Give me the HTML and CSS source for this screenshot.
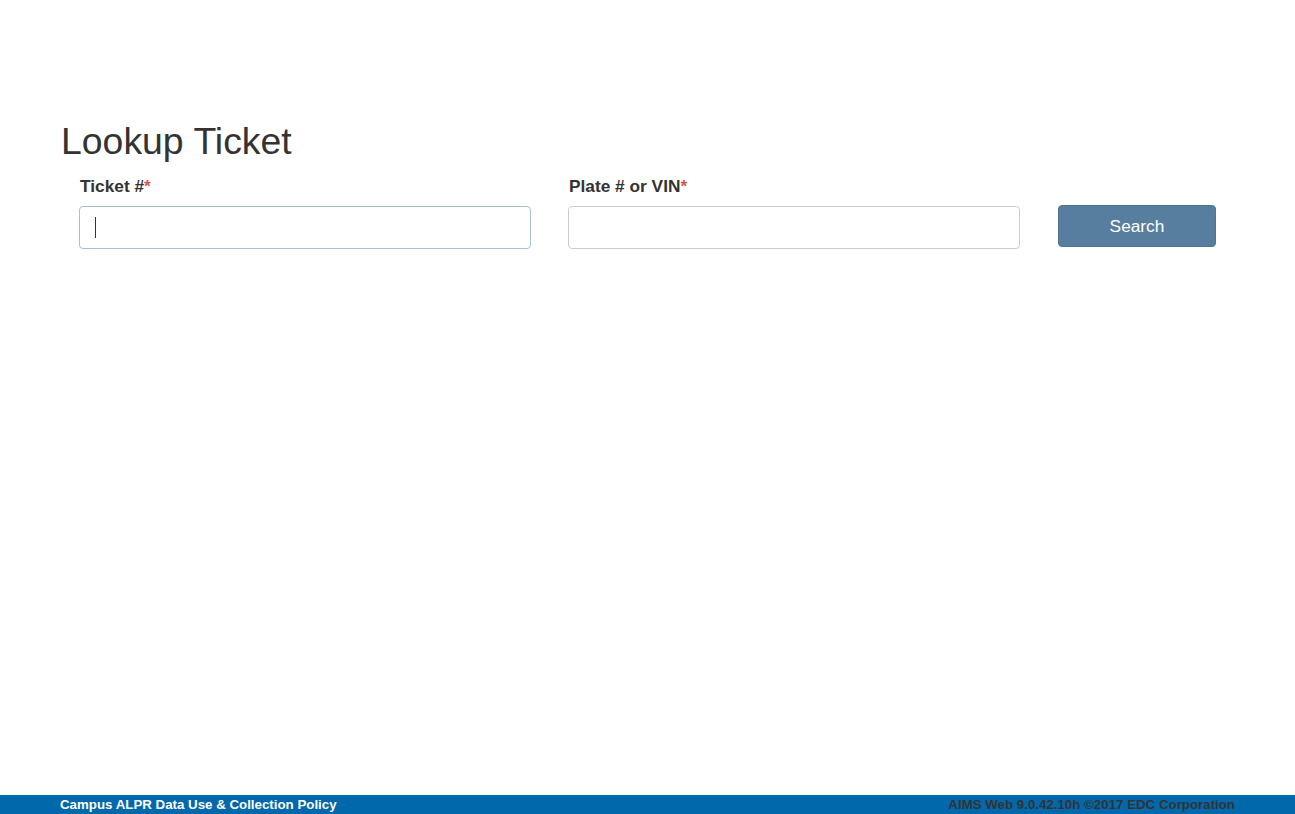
FILE: index.html
```html
<!DOCTYPE html>
<html>
<head>
<meta charset="utf-8">
<link rel="stylesheet" href="styles.css">
</head>
<body>
<div class="page">
  <main class="main">
    <h1 class="title">Lookup Ticket</h1>
    <form class="form-row">
      <div class="field">
        <label class="label">Ticket #<span class="req">*</span></label>
        <div class="input-wrap">
          <input class="input input-focus" type="text">
          <span class="caret"></span>
        </div>
      </div>
      <div class="field field-2">
        <label class="label">Plate # or VIN<span class="req">*</span></label>
        <div class="input-wrap">
          <input class="input" type="text">
        </div>
      </div>
      <div class="field field-btn">
        <button type="button" class="btn">Search</button>
      </div>
    </form>
  </main>
  <footer class="footer">
    <a class="footer-link">Campus ALPR Data Use &amp; Collection Policy</a>
    <span class="footer-ver">AIMS Web 9.0.42.10h ©2017 EDC Corporation</span>
  </footer>
</div>
</body>
</html>
```

FILE: styles.css
```css
html, body {
  margin: 0;
  padding: 0;
  height: 100%;
}
body {
  font-family: "Liberation Sans", Arial, sans-serif;
  color: #333;
  background: #fff;
}
.page {
  min-height: 100vh;
  display: flex;
  flex-direction: column;
}
.main {
  flex: 1;
  padding: 121px 0 0 61px;
}
.title {
  margin: 0;
  font-size: 37.4px;
  font-weight: normal;
  line-height: 40px;
  color: #333;
}
.form-row {
  display: flex;
  margin: 14px 0 0 18px;
  align-items: flex-start;
}
.field {
  width: 452px;
  margin-right: 37px;
  display: flex;
  flex-direction: column;
}
.field-2 {
  margin-right: 38px;
}
.field-btn {
  width: 158px;
  margin-right: 0;
  padding-top: 30px;
}
.label {
  font-size: 17.3px;
  font-weight: bold;
  line-height: 22px;
  margin: 0 0 9px 1px;
  color: #333;
}
.req {
  color: #d9534f;
}
.input-wrap {
  position: relative;
}
.input {
  box-sizing: border-box;
  width: 100%;
  height: 43px;
  border: 1px solid #ccc;
  border-radius: 4px;
  padding: 6px 12px;
  font-size: 16px;
  font-family: inherit;
  outline: none;
  background: #fff;
  display: block;
}
.input-focus {
  border-color: #a7c0da;
}
.caret {
  position: absolute;
  left: 16px;
  top: 11px;
  width: 1px;
  height: 21px;
  background: #333;
}
.btn {
  box-sizing: border-box;
  width: 158px;
  height: 42px;
  background: #587e9f;
  border: 1px solid #4f7391;
  border-radius: 4px;
  color: #fff;
  font-family: inherit;
  font-size: 17.3px;
  padding: 0;
}
.footer {
  height: 19px;
  background: #0068ab;
  display: flex;
  justify-content: space-between;
  align-items: center;
  padding: 0 60px;
  font-size: 13.3px;
  font-weight: bold;
  line-height: 19px;
}
.footer-link {
  color: #fff;
}
.footer-ver {
  color: #333;
}
```
